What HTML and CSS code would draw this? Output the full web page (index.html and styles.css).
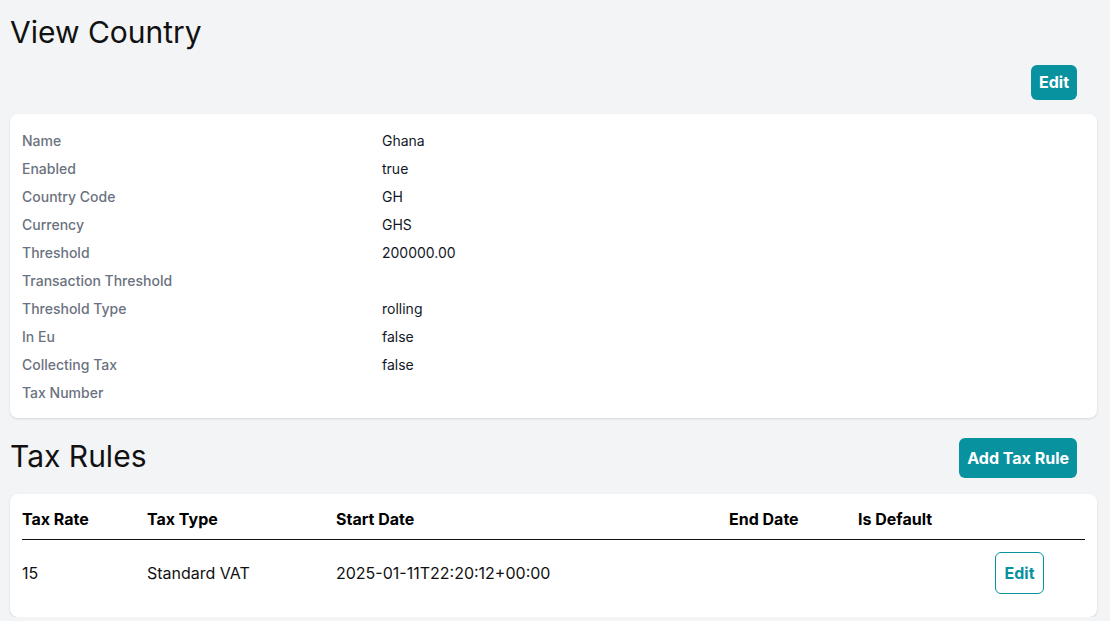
FILE: index.html
```html
<!DOCTYPE html>
<html lang="en">
<head>
<meta charset="utf-8">
<title>View Country</title>
<link rel="stylesheet" href="styles.css">
</head>
<body>
<main class="page">
  <h1 class="title">View Country</h1>
  <div class="actions">
    <button class="btn btn-solid btn-sm">Edit</button>
  </div>
  <section class="card details">
    <dl class="detail-list">
      <div class="detail-row"><dt>Name</dt><dd>Ghana</dd></div>
      <div class="detail-row"><dt>Enabled</dt><dd>true</dd></div>
      <div class="detail-row"><dt>Country Code</dt><dd>GH</dd></div>
      <div class="detail-row"><dt>Currency</dt><dd>GHS</dd></div>
      <div class="detail-row"><dt>Threshold</dt><dd>200000.00</dd></div>
      <div class="detail-row"><dt>Transaction Threshold</dt><dd></dd></div>
      <div class="detail-row"><dt>Threshold Type</dt><dd>rolling</dd></div>
      <div class="detail-row"><dt>In Eu</dt><dd>false</dd></div>
      <div class="detail-row"><dt>Collecting Tax</dt><dd>false</dd></div>
      <div class="detail-row"><dt>Tax Number</dt><dd></dd></div>
    </dl>
  </section>
  <div class="section-head">
    <h2 class="title">Tax Rules</h2>
    <button class="btn btn-solid">Add Tax Rule</button>
  </div>
  <section class="card rules">
    <table class="rules-table">
      <colgroup>
        <col class="c-rate"><col class="c-type"><col class="c-start"><col class="c-end"><col class="c-default"><col class="c-act">
      </colgroup>
      <thead>
        <tr><th>Tax Rate</th><th>Tax Type</th><th>Start Date</th><th>End Date</th><th>Is Default</th><th></th></tr>
      </thead>
      <tbody>
        <tr><td>15</td><td>Standard VAT</td><td>2025-01-11T22:20:12+00:00</td><td></td><td></td><td><button class="btn btn-outline">Edit</button></td></tr>
      </tbody>
    </table>
  </section>
</main>
</body>
</html>
```
FILE: styles.css
```css
* { box-sizing: border-box; }
html, body { margin: 0; padding: 0; }
body {
  background: #f3f4f6;
  font-family: Inter, "Noto Sans", "Liberation Sans", sans-serif;
  color: #111827;
}
.page {
  padding: 14px 13px 0 10px;
}
.title {
  margin: 0;
  font-size: 30px;
  line-height: 36px;
  font-weight: 400;
  color: #111;
}
.actions {
  display: flex;
  justify-content: flex-end;
  padding-right: 20px;
  margin-top: 15px;
  margin-bottom: 14px;
}
.btn {
  font-family: inherit;
  font-size: 16px;
  font-weight: 700;
  line-height: 24px;
  border-radius: 6px;
  cursor: pointer;
}
.btn-solid {
  background: #08929f;
  color: #fff;
  border: none;
  padding: 8px 8px;
}
.btn-sm {
  padding: 5px 8px 6px;
}
.btn-outline {
  background: #fff;
  color: #08929f;
  border: 1px solid #08929f;
  padding: 8px 8px;
  width: 49px;
}
.card {
  background: #fff;
  border-radius: 8px;
  box-shadow: 0 1px 3px rgba(0,0,0,0.08), 0 1px 2px rgba(0,0,0,0.05);
}
.details {
  padding: 13px 12px 11px;
}
.detail-list { margin: 0; }
.detail-row {
  display: grid;
  grid-template-columns: 360px 1fr;
  font-size: 14px;
  line-height: 20px;
  padding: 4px 0;
}
.detail-row dt { color: #6b7280; font-weight: 500; }
.detail-row dd { margin: 0; color: #111827; }
.section-head {
  display: flex;
  justify-content: space-between;
  align-items: flex-start;
  padding-right: 20px;
  margin-top: 20px;
  margin-bottom: 16px;
}
.rules {
  padding: 12px 12px 11px;
}
.rules-table {
  width: 100%;
  border-collapse: collapse;
  table-layout: fixed;
  font-size: 16px;
  line-height: 24px;
  color: #111;
}
.c-rate { width: 125px; }
.c-type { width: 189px; }
.c-start { width: 393px; }
.c-end { width: 129px; }
.c-default { width: 137px; }
.c-act { width: 90px; }
.rules-table th {
  text-align: left;
  font-weight: 700;
  color: #000;
  padding: 1px 0 8px;
  border-bottom: 1px solid #111;
}
.rules-table td {
  padding: 12px 0;
  vertical-align: middle;
}
```
